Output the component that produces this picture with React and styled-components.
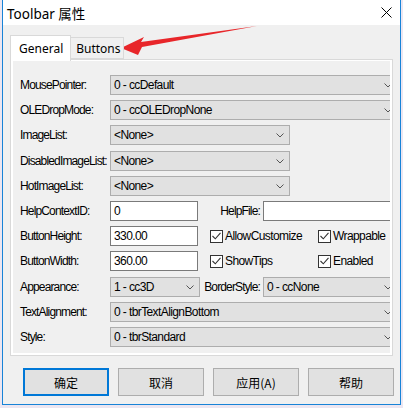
import React from "react";
import styled, { createGlobalStyle } from "styled-components";

const GlobalStyle = createGlobalStyle`
  body {
    margin: 0;
    background: #ece6f1;
    font-family: "Liberation Sans", "Noto Sans CJK SC", sans-serif;
  }
`;

const Window = styled.div`
  position: relative;
  box-sizing: border-box;
  margin-left: 2px;
  width: 399px;
  height: 405px;
  border: 1px solid #1883d7;
  border-top: none;
  background: #f0f0f0;
  overflow: hidden;
`;

const TitleBar = styled.div`
  height: 25px;
  background: #fff;
  display: flex;
  align-items: center;
  justify-content: space-between;
  padding: 0 8px 0 4px;
  font: 13.5px "Noto Sans", "Noto Sans CJK SC", sans-serif;
  color: #000;
`;

const Body = styled.div`
  padding: 10px 0 0 7px;
`;

const TabStrip = styled.div`
  display: flex;
  align-items: flex-end;
  height: 24px;
  position: relative;
  z-index: 1;
`;

const Tab = styled.div`
  box-sizing: border-box;
  height: ${p => (p.active ? "26px" : "22px")};
  margin-bottom: ${p => (p.active ? "-2px" : "0")};
  padding: ${p => (p.active ? "4px 7px 0 8px" : "2px 2px 0 5px")};
  border: 1px solid #d9d9d9;
  border-bottom: ${p => (p.active ? "none" : "1px solid #d9d9d9")};
  border-left: ${p => (p.active ? "1px solid #d9d9d9" : "none")};
  background: ${p => (p.active ? "#fff" : "#f0f0f0")};
  font: 12px "Noto Sans", "Open Sans", sans-serif;
  color: #000;
`;

const Panel = styled.div`
  box-sizing: border-box;
  width: 383px;
  height: 297px;
  border: 1px solid #d9d9d9;
  background: #fff;
  padding: 1px 2px 2px 2px;
`;

const Inner = styled.div`
  height: 100%;
  background: #f0f0f0;
  overflow: hidden;
  padding: 14px 0 0 7px;
  box-sizing: border-box;
  display: flex;
  flex-direction: column;
  gap: 5.2px;
`;

const Row = styled.div`
  display: flex;
  align-items: center;
  height: 20px;
  white-space: nowrap;
`;

const Label = styled.span`
  box-sizing: border-box;
  flex: none;
  width: ${p => p.width || 90}px;
  text-align: ${p => (p.right ? "right" : "left")};
  padding-right: ${p => (p.right ? 3 : 0)}px;
  font-size: 12px;
  letter-spacing: -0.85px;
  color: #000;
`;

const ComboBox = styled.div`
  position: relative;
  box-sizing: border-box;
  flex: none;
  width: ${p => p.width}px;
  height: 20px;
  background: #e1e1e1;
  border: 1px solid #adadad;
  padding: 2px 0 0 3px;
  font-size: 12px;
  letter-spacing: -0.6px;
  color: #000;
`;

const Chevron = styled.svg`
  position: absolute;
  right: 5px;
  top: 7px;
`;

const TextBox = styled.div`
  box-sizing: border-box;
  flex: none;
  width: ${p => p.width}px;
  height: 20px;
  background: #fff;
  border: 1px solid #7a7a7a;
  padding: 2px 0 0 3px;
  font-size: 12px;
  letter-spacing: -0.6px;
  color: #000;
`;

const Check = styled.label`
  display: flex;
  align-items: center;
  gap: 2px;
  margin-left: ${p => p.offset}px;
  width: ${p => p.width}px;
  flex: none;
  font-size: 12px;
  letter-spacing: -0.6px;
  color: #000;
`;

const Box = styled.span`
  box-sizing: border-box;
  display: inline-flex;
  align-items: center;
  justify-content: center;
  width: 13px;
  height: 13px;
  border: 1px solid #333;
  background: #fff;
`;

const Buttons = styled.div`
  display: flex;
  gap: 9px;
  margin: 12px 0 0 13px;
`;

const Button = styled.div`
  box-sizing: border-box;
  width: 86px;
  height: 28px;
  display: flex;
  align-items: center;
  justify-content: center;
  background: #e1e1e1;
  border: ${p => (p.primary ? "2px solid #0078d7" : "1px solid #adadad")};
  font: 12px "Noto Sans CJK SC", "Noto Sans", sans-serif;
  color: #000;
`;

const Arrow = styled.svg`
  position: absolute;
  left: 0;
  top: 0;
  pointer-events: none;
`;

const Combo = ({ width, children }) => (
  <ComboBox width={width}>
    {children}
    <Chevron width="8" height="5" viewBox="0 0 8 5">
      <path d="M0.5 0.5 L4 4 L7.5 0.5" fill="none" stroke="#555" strokeWidth="1" />
    </Chevron>
  </ComboBox>
);

const CheckItem = ({ offset, width, children }) => (
  <Check offset={offset} width={width}>
    <Box>
      <svg width="9" height="8" viewBox="0 0 9 8">
        <path d="M0.5 4 L3.3 6.8 L8.5 0.8" fill="none" stroke="#333" strokeWidth="1.1" />
      </svg>
    </Box>
    {children}
  </Check>
);

export default function App() {
  return (
    <>
      <GlobalStyle />
      <Window>
        <TitleBar>
          <span>Toolbar 属性</span>
          <svg width="11" height="11" viewBox="0 0 11 11">
            <path d="M0.5 0.5 L10.5 10.5 M10.5 0.5 L0.5 10.5" stroke="#000" strokeWidth="1" />
          </svg>
        </TitleBar>
        <Body>
          <TabStrip>
            <Tab active>General</Tab>
            <Tab>Buttons</Tab>
          </TabStrip>
          <Panel>
            <Inner>
              <Row>
                <Label>MousePointer:</Label>
                <Combo width={288}>0 - ccDefault</Combo>
              </Row>
              <Row>
                <Label>OLEDropMode:</Label>
                <Combo width={288}>0 - ccOLEDropNone</Combo>
              </Row>
              <Row>
                <Label>ImageList:</Label>
                <Combo width={180}>&lt;None&gt;</Combo>
              </Row>
              <Row>
                <Label>DisabledImageList:</Label>
                <Combo width={180}>&lt;None&gt;</Combo>
              </Row>
              <Row>
                <Label>HotImageList:</Label>
                <Combo width={180}>&lt;None&gt;</Combo>
              </Row>
              <Row>
                <Label>HelpContextID:</Label>
                <TextBox width={88}>0</TextBox>
                <Label width={65} right>HelpFile:</Label>
                <TextBox width={140} />
              </Row>
              <Row>
                <Label>ButtonHeight:</Label>
                <TextBox width={88}>330.00</TextBox>
                <CheckItem offset={12} width={108}>AllowCustomize</CheckItem>
                <CheckItem offset={0} width={80}>Wrappable</CheckItem>
              </Row>
              <Row>
                <Label>ButtonWidth:</Label>
                <TextBox width={88}>360.00</TextBox>
                <CheckItem offset={12} width={108}>ShowTips</CheckItem>
                <CheckItem offset={0} width={80}>Enabled</CheckItem>
              </Row>
              <Row>
                <Label>Appearance:</Label>
                <Combo width={90}>1 - cc3D</Combo>
                <Label width={63} right>BorderStyle:</Label>
                <Combo width={135}>0 - ccNone</Combo>
              </Row>
              <Row>
                <Label>TextAlignment:</Label>
                <Combo width={288}>0 - tbrTextAlignBottom</Combo>
              </Row>
              <Row>
                <Label>Style:</Label>
                <Combo width={288}>0 - tbrStandard</Combo>
              </Row>
            </Inner>
          </Panel>
          <Buttons>
            <Button primary>确定</Button>
            <Button>取消</Button>
            <Button>应用(A)</Button>
            <Button>帮助</Button>
          </Buttons>
        </Body>
        <Arrow width="399" height="80" viewBox="2 0 399 80">
          <polygon
            points="120,48 143,37 140,42 256,26 141,47 137,55"
            fill="#e8262a"
          />
        </Arrow>
      </Window>
    </>
  );
}
